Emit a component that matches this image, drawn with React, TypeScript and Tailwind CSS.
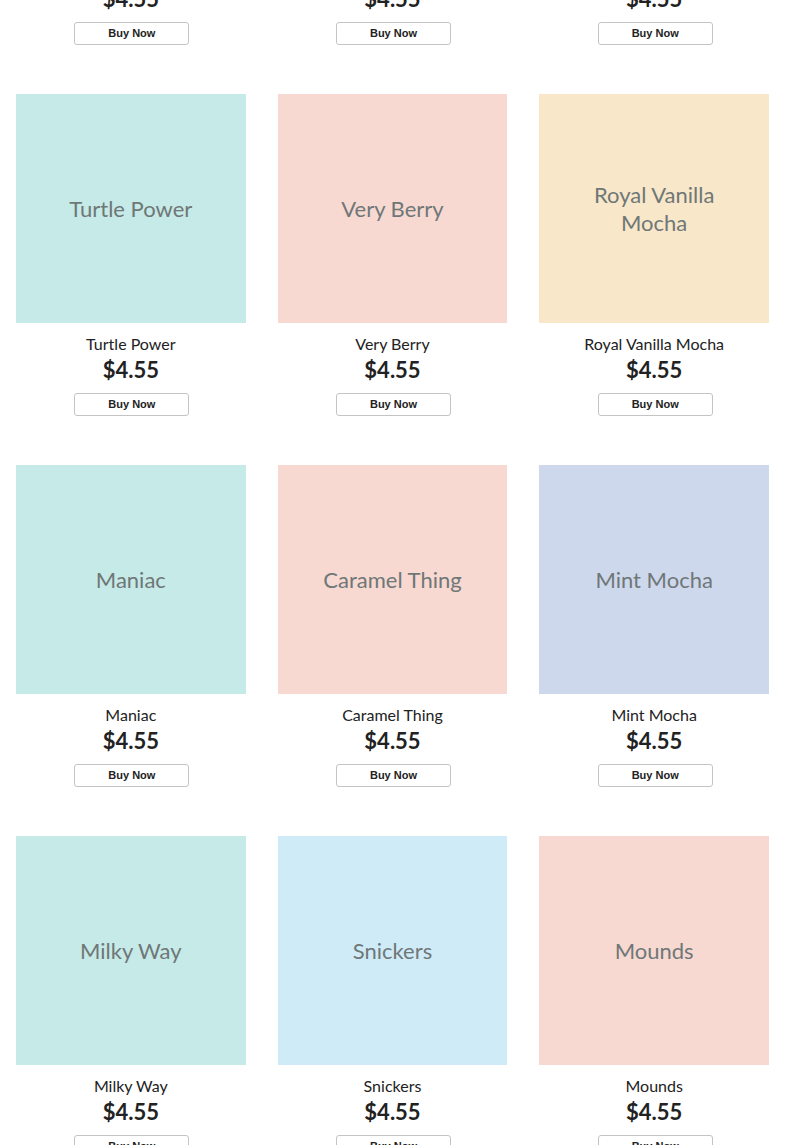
import React from 'react';

type Flavor = { name: string; lines?: string[]; color: string };

const rows: Flavor[][] = [
  [
    { name: 'Mocha Chip', color: 'bg-[#c6eae7]' },
    { name: 'Salted Caramel', color: 'bg-[#f7d9d2]' },
    { name: 'Cookie Dough', color: 'bg-[#f8e7c9]' },
  ],
  [
    { name: 'Turtle Power', color: 'bg-[#c6eae7]' },
    { name: 'Very Berry', color: 'bg-[#f7d9d2]' },
    { name: 'Royal Vanilla Mocha', lines: ['Royal Vanilla', 'Mocha'], color: 'bg-[#f8e7c9]' },
  ],
  [
    { name: 'Maniac', color: 'bg-[#c6eae7]' },
    { name: 'Caramel Thing', color: 'bg-[#f7d9d2]' },
    { name: 'Mint Mocha', color: 'bg-[#ced8ec]' },
  ],
  [
    { name: 'Milky Way', color: 'bg-[#c6eae7]' },
    { name: 'Snickers', color: 'bg-[#d0ebf8]' },
    { name: 'Mounds', color: 'bg-[#f7d9d2]' },
  ],
];

const ProductCard = ({ flavor }: { flavor: Flavor }) => (
  <div className="flex flex-col items-center">
    <div className={`w-full h-[229px] flex items-center justify-center ${flavor.color}`}>
      <span className="text-center text-[22px] leading-[28px] text-[#6f7777]">
        {(flavor.lines ?? [flavor.name]).map((l) => (
          <span key={l} className="block">{l}</span>
        ))}
      </span>
    </div>
    <div className="mt-[11px] text-[16px] leading-5 text-[#222]">{flavor.name}</div>
    <div className="mt-[2px] text-[22px] leading-7 font-bold text-[#222]">$4.55</div>
    <button className="mt-[9px] ml-[2px] h-[23px] w-[115px] rounded-[3px] border border-[#c4c4c4] bg-white text-[11px] font-bold text-[#222] font-['Liberation_Sans',Arial,sans-serif]">
      Buy Now
    </button>
  </div>
);

export default function App() {
  return (
    <div className="h-[1145px] overflow-hidden bg-white font-['Lato',sans-serif]">
      <div className="-mt-[277px] px-4 grid grid-cols-3 gap-x-8 gap-y-[49px]">
        {rows.flat().map((f) => (
          <ProductCard key={f.name} flavor={f} />
        ))}
      </div>
    </div>
  );
}
